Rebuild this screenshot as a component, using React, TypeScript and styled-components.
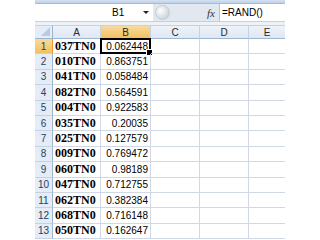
import React from "react";
import styled, { createGlobalStyle } from "styled-components";

const Global = createGlobalStyle`
  html, body { margin: 0; padding: 0; background: #ffffff; }
  body { width: 320px; height: 240px; overflow: hidden; }
`;

const Page = styled.div`
  padding-left: 35px;
  width: 250px;
  font-family: "Liberation Sans", Arial, sans-serif;
`;

const TopStrip = styled.div`
  height: 3px;
  background: linear-gradient(#d6e3f3, #bcd0e8);
  border-bottom: 1px solid #a5bcd9;
`;

const FormulaBar = styled.div`
  display: flex;
  height: 17px;
  background: #e2e8f0;
`;

const NameBox = styled.div`
  position: relative;
  width: 118px;
  background: #ffffff;
  display: flex;
  align-items: center;
  font-size: 10px;
  color: #000;
  padding-left: 77px;
  box-sizing: border-box;
`;

const Arrow = styled.span`
  position: absolute;
  right: 4px;
  top: 7px;
  width: 0;
  height: 0;
  border-left: 3px solid transparent;
  border-right: 3px solid transparent;
  border-top: 3px solid #222;
`;

const Middle = styled.div`
  flex: 1;
  display: flex;
  align-items: center;
  justify-content: space-between;
  padding: 0 4px 0 2px;
  border-right: 1px solid #b7c3d3;
`;

const RoundButton = styled.div`
  width: 15px;
  height: 15px;
  border-radius: 50%;
  background: radial-gradient(circle at 35% 35%, #ffffff, #cfd6df 70%, #b9c2ce);
  border: 1px solid #c3cbd6;
  box-sizing: border-box;
`;

const Fx = styled.span`
  font-family: "Liberation Serif", "Times New Roman", serif;
  font-style: italic;
  font-size: 11px;
  color: #333;
`;

const Formula = styled.div`
  width: 65px;
  background: #ffffff;
  font-size: 10px;
  color: #000;
  display: flex;
  align-items: center;
  padding-left: 2px;
  box-sizing: border-box;
`;

const Gap = styled.div`
  height: 3px;
  background: #eef2f7;
  border-top: 1px solid #c6d0dc;
`;

const Grid = styled.div`
  display: grid;
  grid-template-columns: 18px 48px 50px 49px 49px 36px;
  grid-template-rows: 14px repeat(13, 15.4px);
`;

const Corner = styled.div`
  position: relative;
  background: #e4ecf7;
  border-right: 1px solid #9eb6ce;
  border-bottom: 1px solid #9eb6ce;
  border-top: 1px solid #c5d2e2;
  box-sizing: border-box;
  &::after {
    content: "";
    position: absolute;
    right: 2px;
    bottom: 2px;
    width: 0;
    height: 0;
    border-left: 9px solid transparent;
    border-bottom: 9px solid #b9cbe2;
  }
`;

const ColHead = styled.div<{ $sel?: boolean; $last?: boolean }>`
  display: flex;
  align-items: center;
  justify-content: center;
  font-size: 10px;
  color: #2a2a2a;
  box-sizing: border-box;
  border-top: 1px solid #c5d2e2;
  border-bottom: 1px solid ${(p) => (p.$sel ? "#f29536" : "#9eb6ce")};
  border-right: ${(p) => (p.$last ? "none" : "1px solid #c5d2e2")};
  background: ${(p) =>
    p.$sel
      ? "linear-gradient(#f9d99f, #f1c15f)"
      : "linear-gradient(#eef3fa, #dee7f3)"};
`;

const RowHead = styled.div<{ $sel?: boolean }>`
  display: flex;
  align-items: center;
  justify-content: center;
  font-size: 10px;
  color: #27415f;
  box-sizing: border-box;
  border-right: 1px solid ${(p) => (p.$sel ? "#f29536" : "#9eb6ce")};
  border-bottom: 1px solid #c5d2e2;
  background: ${(p) =>
    p.$sel ? "linear-gradient(#f9d99f, #f1c15f)" : "#e4ecf7"};
`;

const Cell = styled.div<{ $last?: boolean; $align?: "left" | "right" }>`
  position: relative;
  display: flex;
  align-items: center;
  justify-content: ${(p) => (p.$align === "right" ? "flex-end" : "flex-start")};
  padding: 0 2px;
  box-sizing: border-box;
  border-bottom: 1px solid #d0d7e5;
  border-right: ${(p) => (p.$last ? "none" : "1px solid #d0d7e5")};
  white-space: nowrap;
`;

const Code = styled.span`
  font-family: "Liberation Serif", "Times New Roman", serif;
  font-weight: bold;
  font-size: 12px;
  color: #000;
`;

const Num = styled.span`
  font-family: "Liberation Sans", Arial, sans-serif;
  font-size: 10px;
  color: #000;
`;

const Selection = styled.div`
  position: absolute;
  left: -1px;
  top: -1px;
  right: -1px;
  bottom: -1px;
  border: 2px solid #000;
  pointer-events: none;
  &::after {
    content: "";
    position: absolute;
    right: -4px;
    bottom: -4px;
    width: 5px;
    height: 5px;
    background: #000;
    border: 1px solid #fff;
  }
`;

const rows: [string, string][] = [
  ["037TN0", "0.062448"],
  ["010TN0", "0.863751"],
  ["041TN0", "0.058484"],
  ["082TN0", "0.564591"],
  ["004TN0", "0.922583"],
  ["035TN0", "0.20035"],
  ["025TN0", "0.127579"],
  ["009TN0", "0.769472"],
  ["060TN0", "0.98189"],
  ["047TN0", "0.712755"],
  ["062TN0", "0.382384"],
  ["068TN0", "0.716148"],
  ["050TN0", "0.162647"],
];

const cols = ["A", "B", "C", "D", "E"];

export default function App() {
  return (
    <Page>
      <Global />
      <TopStrip />
      <FormulaBar>
        <NameBox>
          B1
          <Arrow />
        </NameBox>
        <Middle>
          <RoundButton />
          <Fx>fx</Fx>
        </Middle>
        <Formula>=RAND()</Formula>
      </FormulaBar>
      <Gap />
      <Grid>
        <Corner />
        {cols.map((c, i) => (
          <ColHead key={c} $sel={c === "B"} $last={i === cols.length - 1}>
            {c}
          </ColHead>
        ))}
        {rows.map(([code, num], r) => (
          <React.Fragment key={r}>
            <RowHead $sel={r === 0}>{r + 1}</RowHead>
            <Cell>
              <Code>{code}</Code>
            </Cell>
            <Cell $align="right">
              <Num>{num}</Num>
              {r === 0 && <Selection />}
            </Cell>
            <Cell />
            <Cell />
            <Cell $last />
          </React.Fragment>
        ))}
      </Grid>
    </Page>
  );
}
